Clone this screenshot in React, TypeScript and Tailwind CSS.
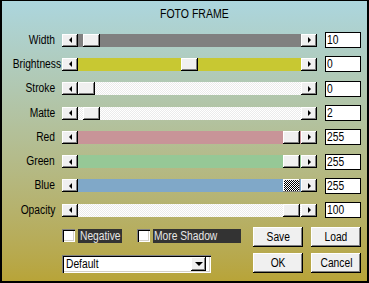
import React from "react";

const raised =
  "bg-[#f0f0f0] shadow-[inset_-1px_-1px_#000,inset_1px_1px_#fff,inset_-2px_-2px_#808080]";

function LeftArrow() {
  return (
    <div className="w-0 h-0 border-y-[3px] border-y-transparent border-r-[3px] border-r-black" />
  );
}
function RightArrow() {
  return (
    <div className="w-0 h-0 border-y-[3px] border-y-transparent border-l-[3px] border-l-black" />
  );
}

type RowProps = {
  label: string;
  value: string;
  track: string;
  thumb: number;
  checker?: boolean;
};

function Row({ label, value, track, thumb, checker }: RowProps) {
  return (
    <div className="h-[24.3px] flex items-center">
      <div className="w-[53px] text-right text-black leading-[15px] whitespace-nowrap">
        <span className="inline-block origin-right scale-x-[0.82]">{label}</span>
      </div>
      <div className="ml-[7px] w-[255px] h-[13px] flex">
        <div className={`w-[16px] h-full flex items-center justify-center ${raised}`}>
          <LeftArrow />
        </div>
        <div className={`relative flex-1 h-full ${track}`}>
          {checker ? (
            <div
              className="absolute top-0 h-full w-[17px] bg-[repeating-conic-gradient(#000_0_25%,#fff_0_50%)] bg-[length:2px_2px] shadow-[inset_-1px_-1px_#808080,inset_1px_1px_#fff]"
              style={{ left: thumb }}
            />
          ) : (
            <div className={`absolute top-0 h-full w-[17px] ${raised}`} style={{ left: thumb }} />
          )}
        </div>
        <div className={`w-[16px] h-full flex items-center justify-center ${raised}`}>
          <RightArrow />
        </div>
      </div>
      <div className="ml-[8px] w-[36px] h-[16px] bg-white border border-black pl-[1px] leading-[14px] text-black whitespace-nowrap">
        <span className="inline-block origin-left scale-x-[0.82]">{value}</span>
      </div>
    </div>
  );
}

const dither =
  "bg-[repeating-conic-gradient(#ffffff_0_25%,#ebebeb_0_50%)] bg-[length:2px_2px]";

const sunken =
  "shadow-[inset_1px_1px_#808080,inset_2px_2px_#000,inset_-1px_-1px_#fff,inset_-2px_-2px_#d4d0c8]";

export default function App() {
  return (
    <div className="w-[369px] h-[283px] overflow-hidden bg-linear-to-b from-[#acd6de] to-[#b8a438] border-t border-l-2 border-r-2 border-b-2 border-black font-['Liberation_Sans',Arial,sans-serif] text-[12.5px]">
      <div className="h-[27px] pt-[6px] leading-[15px] text-black whitespace-nowrap">
        <span className="ml-[158px] inline-block origin-left scale-x-[0.84]">FOTO FRAME</span>
      </div>
      <Row label="Width" value="10" track="bg-[#808080]" thumb={5} />
      <Row label="Brightness" value="0" track="bg-[#c8c832]" thumb={103} />
      <Row label="Stroke" value="0" track={dither} thumb={0} />
      <Row label="Matte" value="2" track={dither} thumb={5} />
      <Row label="Red" value="255" track="bg-[#c89498]" thumb={205} />
      <Row label="Green" value="255" track="bg-[#96c896]" thumb={205} />
      <Row label="Blue" value="255" track="bg-[#80a8c8]" thumb={205} checker />
      <Row label="Opacity" value="100" track={dither} thumb={205} />

      <div className="mt-[5px] flex pl-[60px]">
        <div className="w-[191px] flex flex-col">
          <div className="mt-[2px] h-[13px] flex items-center">
            <div className={`w-[13px] h-[13px] bg-white ${sunken}`} />
            <div className="ml-[3px] w-[44px] h-[14px] bg-[#333333] text-[#e8e8e8] leading-[14px] pl-[2px] whitespace-nowrap">
              <span className="inline-block origin-left scale-x-[0.82]">Negative</span>
            </div>
            <div className={`ml-[15px] w-[13px] h-[13px] bg-white ${sunken}`} />
            <div className="ml-[3px] w-[88px] h-[14px] bg-[#333333] text-[#e8e8e8] leading-[14px] pl-[1px] whitespace-nowrap">
              <span className="inline-block origin-left scale-x-[0.82]">More Shadow</span>
            </div>
          </div>
          <div className={`mt-[13px] w-[149px] h-[18px] bg-white flex items-center ${sunken}`}>
            <div className="flex-1 pl-[4px] leading-[14px] text-black whitespace-nowrap">
              <span className="inline-block origin-left scale-x-[0.82]">Default</span>
            </div>
            <div className={`mr-[5px] w-[15px] h-[14px] flex items-center justify-center ${raised}`}>
              <div className="w-0 h-0 border-x-[4px] border-x-transparent border-t-[4px] border-t-black" />
            </div>
          </div>
        </div>
        <div className="grid grid-cols-[50px_50px] gap-x-[8px] gap-y-[6px]">
          {["Save", "Load", "OK", "Cancel"].map((t) => (
            <div
              key={t}
              className={`h-[20px] flex items-center justify-center text-black leading-[15px] whitespace-nowrap ${raised}`}
            >
              <span className="inline-block scale-x-[0.82]">{t}</span>
            </div>
          ))}
        </div>
      </div>
    </div>
  );
}
